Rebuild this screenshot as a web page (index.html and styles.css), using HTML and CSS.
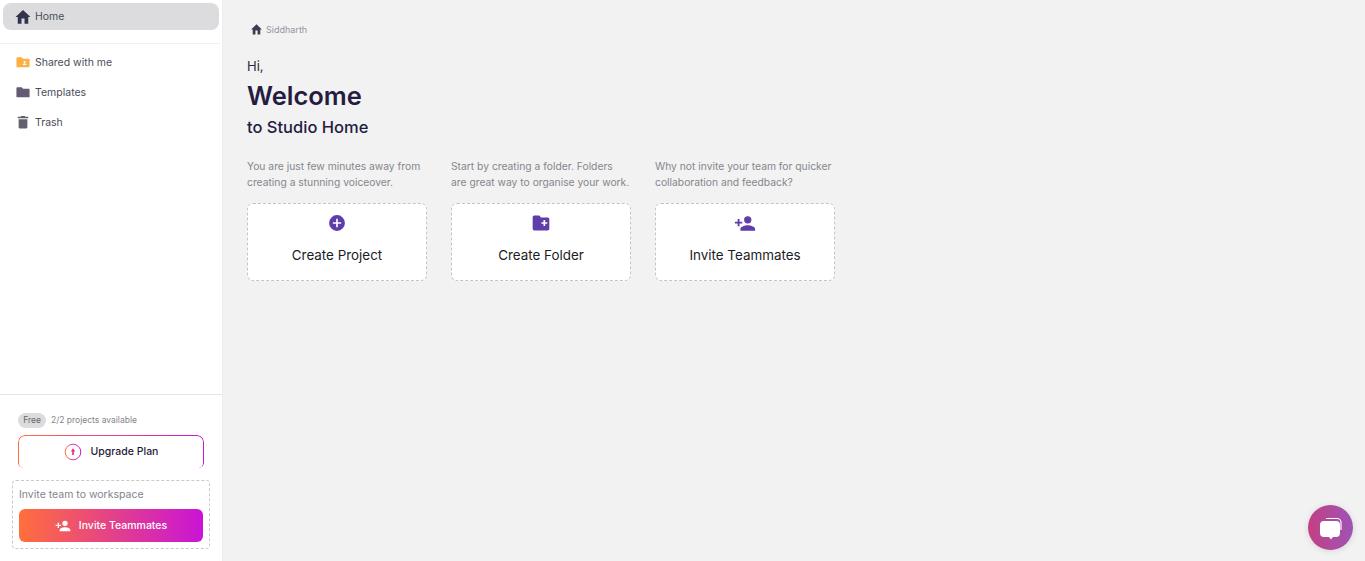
FILE: index.html
```html
<!DOCTYPE html>
<html lang="en">
<head>
<meta charset="utf-8">
<title>Studio Home</title>
<link rel="stylesheet" href="styles.css">
</head>
<body>
<div class="app">
  <aside class="sidebar">
    <nav class="nav-top">
      <a class="nav-item active">
        <svg class="nav-icon home" viewBox="0 0 24 24"><path fill="#33334d" d="M10 21v-7h4v7h5v-9h3L12 2.500 2 12h3v9z"/></svg>
        <span>Home</span>
      </a>
    </nav>
    <nav class="nav-list">
      <a class="nav-item">
        <svg class="nav-icon" viewBox="0 0 16 16"><path fill="#fdb044" d="M1.500 2.500h5l1.500 1.700h6.500a1 1 0 0 1 1 1v7.800a1 1 0 0 1-1 1H1.500a1 1 0 0 1-1-1V3.500a1 1 0 0 1 1-1z"/><circle cx="9.800" cy="8" r="1.200" fill="#fff"/><path fill="#fff" d="M7.500 11.500c0-1.200 1-1.900 2.300-1.900s2.300.7 2.300 1.900z"/></svg>
        <span>Shared with me</span>
      </a>
      <a class="nav-item">
        <svg class="nav-icon" viewBox="0 0 16 16"><path fill="#645a72" d="M1.500 2.500h5l1.500 1.700h6.500a1 1 0 0 1 1 1v7.800a1 1 0 0 1-1 1H1.500a1 1 0 0 1-1-1V3.500a1 1 0 0 1 1-1z"/></svg>
        <span>Templates</span>
      </a>
      <a class="nav-item">
        <svg class="nav-icon" viewBox="0 0 16 16"><path fill="#645f6c" d="M6 1h4l.8 1H14v1.800H2V2h3.200zM3 4.800h10V14a1.300 1.300 0 0 1-1.300 1.300H4.300A1.300 1.300 0 0 1 3 14z"/></svg>
        <span>Trash</span>
      </a>
    </nav>
    <div class="side-bottom">
      <div class="plan-row"><span class="plan-badge">Free</span><span class="plan-text">2/2 projects available</span></div>
      <button class="upgrade">
        <svg class="upgrade-icon" viewBox="0 0 18 18"><defs><linearGradient id="ug" x1="0" x2="1"><stop offset="0" stop-color="#ff6f3c"/><stop offset="1" stop-color="#c914d6"/></linearGradient></defs><circle cx="9" cy="9" r="7.800" fill="none" stroke="url(#ug)" stroke-width="1"/><path fill="#e0306f" d="M9 5.200 11.200 8.600H9.800v3.400H8.200V8.600H6.800z"/></svg>
        <span>Upgrade Plan</span>
      </button>
      <div class="invite-box">
        <p class="invite-label">Invite team to workspace</p>
        <button class="invite-btn">
          <svg class="invite-icon" viewBox="0 0 24 18"><path fill="#fff" d="M15 9a4 4 0 1 0 0-8 4 4 0 0 0 0 8zM6 7V4H4v3H1v2h3v3h2V9h3V7zm9 4c-2.700 0-8 1.300-8 4v2h16v-2c0-2.700-5.300-4-8-4z"/></svg>
          <span>Invite Teammates</span>
        </button>
      </div>
    </div>
  </aside>
  <main class="main">
    <div class="crumb">
      <svg class="crumb-icon" viewBox="0 0 24 24"><path fill="#3a3f50" d="M10 21v-7h4v7h5v-9h3L12 2.500 2 12h3v9z"/></svg>
      <span>Siddharth</span>
    </div>
    <p class="hi">Hi,</p>
    <h1 class="welcome">Welcome</h1>
    <h2 class="sub">to Studio Home</h2>
    <div class="cards">
      <section class="col">
        <p class="col-text">You are just few minutes away from creating a stunning voiceover.</p>
        <button class="card">
          <svg class="card-icon" viewBox="0 0 24 24"><path fill="#5f3dab" d="M12 2.500a9.500 9.500 0 1 0 0 19 9.500 9.500 0 0 0 0-19zM17 13h-4v4h-2v-4H7v-2h4V7h2v4h4z"/></svg>
          <span>Create Project</span>
        </button>
      </section>
      <section class="col">
        <p class="col-text">Start by creating a folder. Folders are great way to organise your work.</p>
        <button class="card">
          <svg class="card-icon" viewBox="0 0 24 24"><path fill="#5f3dab" d="M4 3h6l2 2.500h8a2 2 0 0 1 2 2V19a2 2 0 0 1-2 2H4a2 2 0 0 1-2-2V5a2 2 0 0 1 2-2zm11 5.500v2.500h-2.500v2H15v2.500h2V13h2.500v-2H17V8.500z"/></svg>
          <span>Create Folder</span>
        </button>
      </section>
      <section class="col">
        <p class="col-text">Why not invite your team for quicker collaboration and feedback?</p>
        <button class="card">
          <svg class="card-icon wide" viewBox="0 0 24 18"><path fill="#5f3dab" d="M15 9a4 4 0 1 0 0-8 4 4 0 0 0 0 8zM6 7V4H4v3H1v2h3v3h2V9h3V7zm9 4c-2.700 0-8 1.300-8 4v2h16v-2c0-2.700-5.300-4-8-4z"/></svg>
          <span>Invite Teammates</span>
        </button>
      </section>
    </div>
    <button class="chat" aria-label="Chat">
      <svg viewBox="0 0 28 28" class="chat-icon"><path fill="none" stroke="#fff" stroke-width="1.200" d="M9 4.500h11a4 4 0 0 1 4 4V16"/><path fill="#fff" d="M7 7h12a4 4 0 0 1 4 4v8a4 4 0 0 1-4 4h-3l-2 2.500L12 23H7a4 4 0 0 1-4-4v-8a4 4 0 0 1 4-4z"/></svg>
    </button>
  </main>
</div>
</body>
</html>
```
FILE: styles.css
```css
* { box-sizing: border-box; }
html, body { margin: 0; height: 100%; overflow: hidden; }
body { font-family: "Inter", "Open Sans", sans-serif; background: #f2f2f3; color: #1f1b3a; }
p, h1, h2 { margin: 0; }
button { font-family: inherit; cursor: pointer; }
.app { display: flex; height: 561px; }
.sidebar { width: 223px; flex: none; background: #fff; border-right: 1px solid #eceded; display: flex; flex-direction: column; }
.nav-top { padding: 3px 3px 13px; border-bottom: 1px solid #f1f1f2; margin-right: 2px; }
.nav-list { padding: 3px 3px 0; display: flex; flex-direction: column; }
.nav-item { display: flex; align-items: center; height: 30px; padding-left: 11px; gap: 3px; font-size: 10.500px; color: #4b4c58; border-radius: 8px; }
.nav-item.active { height: 27px; background: #dcdcdf; width: 216px; }
.nav-icon { width: 14px; height: 14px; margin: 0 2px; flex: none; }
.nav-icon.home { width: 18px; height: 18px; margin: 0; }
.side-bottom { margin-top: auto; border-top: 1px solid #e4e4e6; height: 167px; padding: 18px 12px 0; }
.plan-row { display: flex; align-items: center; gap: 5px; margin-left: 6px; height: 14px; }
.plan-badge { background: #dcdcdf; border-radius: 8px; font-size: 8.500px; color: #666; width: 28px; height: 15px; display: flex; align-items: center; justify-content: center; }
.plan-text { font-size: 8.500px; color: #83848c; }
.upgrade { margin: 8px 0 0 6px; width: 186px; height: 33px; background: #fff; border: 0; position: relative; display: flex; align-items: center; justify-content: center; gap: 9px; font-size: 10.500px; font-weight: 500; color: #1f1b3a; padding: 0; }
.upgrade::before { content: ""; position: absolute; inset: 0; border-radius: 7px 7px 5px 5px; padding: 1px 1px 0; background: linear-gradient(90deg, #ff6f3c, #c914d6); -webkit-mask: linear-gradient(#fff 0 0) content-box, linear-gradient(#fff 0 0); -webkit-mask-composite: xor; mask-composite: exclude; }
.upgrade-icon { width: 18px; height: 18px; }
.invite-box { margin-top: 12px; width: 198px; height: 69px; border: 1px dashed #c9c9cc; border-radius: 4px; padding: 7px 6px 0; }
.invite-label { font-size: 10.500px; color: #83848c; line-height: 14px; }
.invite-btn { margin-top: 7px; width: 184px; height: 33px; border: 0; border-radius: 6px; background: linear-gradient(90deg, #ff6f3c, #c914d6); color: #fff; font-size: 10.500px; font-weight: 500; display: flex; align-items: center; justify-content: center; gap: 8px; padding: 0; }
.invite-icon { width: 16px; height: 12px; }
.main { flex: 1; position: relative; padding: 21px 0 0 24px; }
.crumb { display: flex; align-items: center; gap: 3px; margin-left: 3px; height: 16px; font-size: 9px; color: #94959c; }
.crumb-icon { width: 13px; height: 13px; }
.hi { margin-top: 20px; font-size: 13px; line-height: 18px; color: #2c2a40; }
.welcome { margin-top: 5px; font-size: 25.500px; line-height: 32px; font-weight: 600; color: #251c40; }
.sub { margin-top: 5px; font-size: 16.500px; line-height: 20px; font-weight: 500; color: #251c40; }
.cards { display: flex; gap: 24px; margin-top: 21px; }
.col { width: 180px; }
.col-text { font-size: 10.300px; line-height: 16px; color: #85868c; height: 32px; }
.card { margin-top: 13px; width: 180px; height: 78px; background: #fff; border: 1px dashed #c4c4c7; border-radius: 6px; display: flex; flex-direction: column; align-items: center; padding: 9px 0 0; font-size: 13.400px; color: #1c1c24; }
.card-icon { width: 20px; height: 20px; }
.card-icon.wide { width: 22px; height: 17px; margin: 2px 0 1px; }
.card span { margin-top: 14px; line-height: 16px; }
.chat { position: absolute; right: 12px; bottom: 11px; width: 45px; height: 45px; border-radius: 50%; border: 0; padding: 0; background: linear-gradient(90deg, #c43f84, #9d55b5); display: flex; align-items: center; justify-content: center; box-shadow: 0 1px 6px rgba(0,0,0,.12); }
.chat-icon { width: 28px; height: 28px; }
```
